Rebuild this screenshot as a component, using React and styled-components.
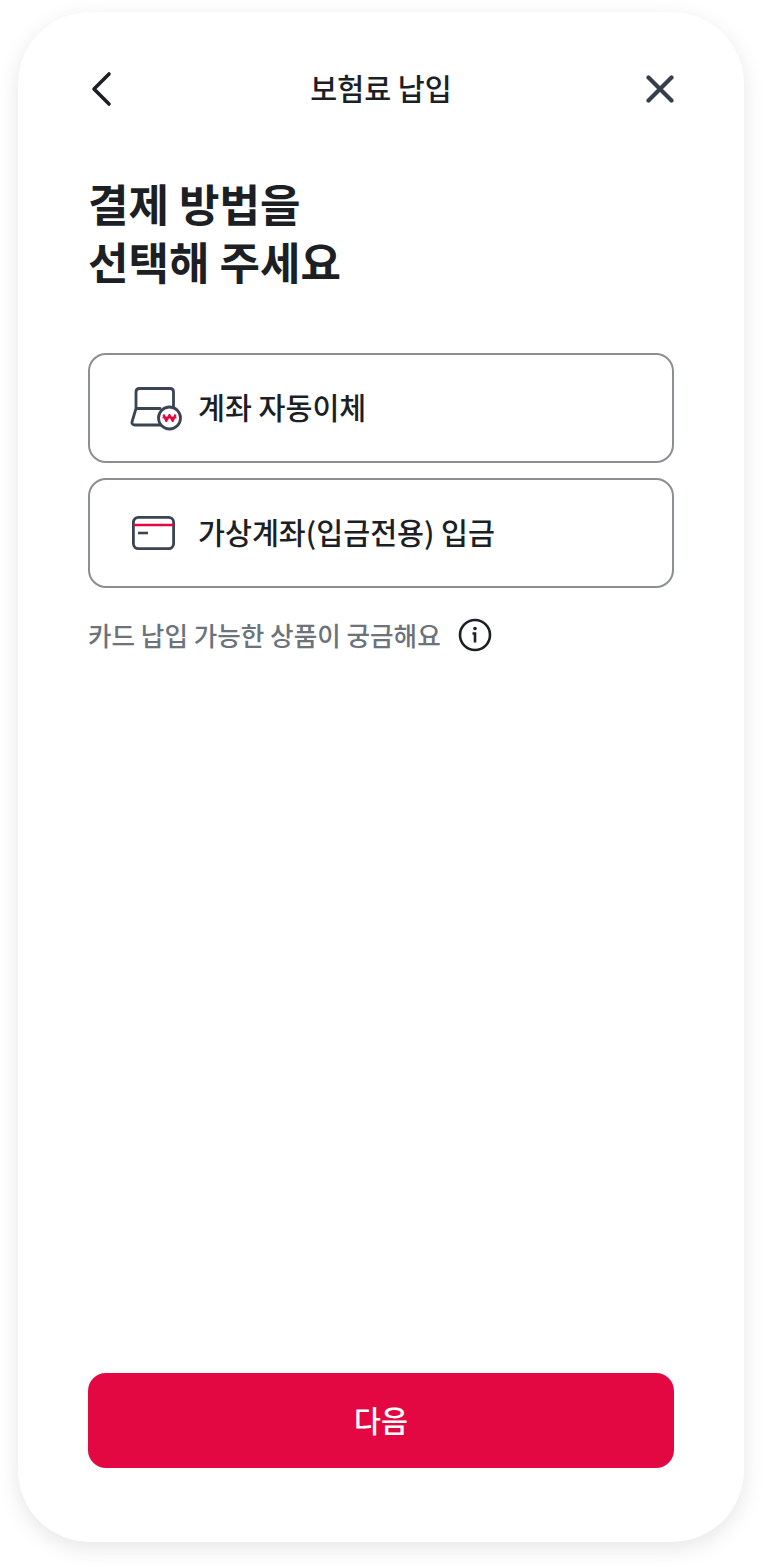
import styled, { createGlobalStyle } from 'styled-components';

const GlobalStyle = createGlobalStyle`
	html, body {
		margin: 0;
		padding: 0;
		background: #fff;
	}
	body {
		font-family: 'Noto Sans CJK KR', 'Noto Sans', sans-serif;
	}
`;

const Page = styled.div`
	width: 762px;
	height: 1566px;
	padding: 12px 18px 24px;
	box-sizing: border-box;
`;

const Phone = styled.div`
	height: 100%;
	box-sizing: border-box;
	padding: 0 70px 74px;
	display: flex;
	flex-direction: column;
	background: #fff;
	border-radius: 72px;
	box-shadow: 0 6px 22px rgba(0, 0, 0, 0.1);
`;

const Header = styled.header`
	height: 64px;
	margin-top: 45px;
	display: flex;
	align-items: center;
	justify-content: space-between;
`;

const IconButton = styled.button`
	width: 32px;
	height: 32px;
	padding: 0;
	border: 0;
	background: none;
	display: flex;
	align-items: center;
	justify-content: ${(props) => (props.$end ? 'flex-end' : 'center')};
`;

const Title = styled.h1`
	margin: 0 0 4px;
	font-size: 29.3px;
	font-weight: 500;
	color: #1c1f24;
`;

const Heading = styled.h2`
	margin: 53px 0 0;
	font-size: 44px;
	line-height: 58px;
	font-weight: 700;
	color: #1c1f24;
`;

const Options = styled.div`
	margin-top: 63px;
	display: flex;
	flex-direction: column;
	gap: 15px;
`;

const Option = styled.button`
	height: 110px;
	box-sizing: border-box;
	padding: 0 0 0 39px;
	display: flex;
	align-items: center;
	gap: 17px;
	background: #fff;
	border: 2px solid #8b8e93;
	border-radius: 18px;
	font-family: inherit;
	font-size: 29.3px;
	font-weight: 500;
	color: #1c1f24;
`;

const OptionLabel = styled.span`
	padding-bottom: 4px;
`;

const Hint = styled.div`
	margin-top: 28px;
	display: flex;
	align-items: center;
	gap: 17px;
	font-size: 25.6px;
	font-weight: 500;
	color: #6c737b;
`;

const Next = styled.button`
	margin-top: auto;
	height: 95px;
	padding: 0 0 4px;
	border: 0;
	border-radius: 18px;
	background: #e30842;
	color: #fff;
	font-family: inherit;
	font-size: 29.3px;
	font-weight: 500;
`;

const BackIcon = () => (
	<svg width="32" height="40" viewBox="0 0 32 40" fill="none">
		<path d="M21 5L6 20l15 15" stroke="#1c1f24" strokeWidth="3.6" strokeLinecap="round" strokeLinejoin="round" />
	</svg>
);

const CloseIcon = () => (
	<svg width="28" height="28" viewBox="0 0 28 28" fill="none">
		<path d="M2.500 2.500l23 23M25.500 2.500l-23 23" stroke="#36404c" strokeWidth="4.200" strokeLinecap="round" />
	</svg>
);

const AccountIcon = () => (
	<svg width="52" height="42" viewBox="0 0 52 42" fill="none" overflow="visible">
		<path
			d="M32 38H6c-2.200 0-3.400-1.400-3-3.200L7 21.500V5c0-2.200 1.300-3.500 3.500-3.500H41c2.200 0 3.500 1.300 3.500 3.500v15M7 21.500h24"
			stroke="#3a4452"
			strokeWidth="2.800"
			strokeLinecap="round"
			strokeLinejoin="round"
		/>
		<circle cx="40.500" cy="31" r="11" fill="#fff" stroke="#3a4452" strokeWidth="2.800" />
		<path d="M33.500 30.500h14" stroke="#e30842" strokeWidth="1.800" />
		<path d="M34.500 27.500l2.800 6.500 3.200-6 3.200 6 2.800-6.500" stroke="#e30842" strokeWidth="2.200" strokeLinejoin="round" />
	</svg>
);

const CardIcon = () => (
	<svg width="52" height="36" viewBox="0 0 52 36" fill="none">
		<rect x="4.400" y="2.400" width="40.200" height="31.200" rx="5" stroke="#3a4452" strokeWidth="2.800" />
		<path d="M4.400 10h40.200" stroke="#e30842" strokeWidth="2.600" />
		<path d="M9 18h10" stroke="#3a4452" strokeWidth="2.600" />
	</svg>
);

const InfoIcon = () => (
	<svg width="34" height="34" viewBox="0 0 34 34" fill="none">
		<circle cx="17" cy="17" r="15" stroke="#1c1f24" strokeWidth="2.600" />
		<circle cx="17" cy="10.500" r="1.800" fill="#1c1f24" />
		<path d="M14.500 15.500H17v9" stroke="#1c1f24" strokeWidth="2.600" />
	</svg>
);

export default function App() {
	return (
		<Page>
			<GlobalStyle />
			<Phone>
				<Header>
					<IconButton>
						<BackIcon />
					</IconButton>
					<Title>보험료 납입</Title>
					<IconButton $end>
						<CloseIcon />
					</IconButton>
				</Header>
				<Heading>
					결제 방법을
					<br />
					선택해 주세요
				</Heading>
				<Options>
					<Option>
						<AccountIcon />
						<OptionLabel>계좌 자동이체</OptionLabel>
					</Option>
					<Option>
						<CardIcon />
						<OptionLabel>가상계좌(입금전용) 입금</OptionLabel>
					</Option>
				</Options>
				<Hint>
					카드 납입 가능한 상품이 궁금해요
					<InfoIcon />
				</Hint>
				<Next>다음</Next>
			</Phone>
		</Page>
	);
}
